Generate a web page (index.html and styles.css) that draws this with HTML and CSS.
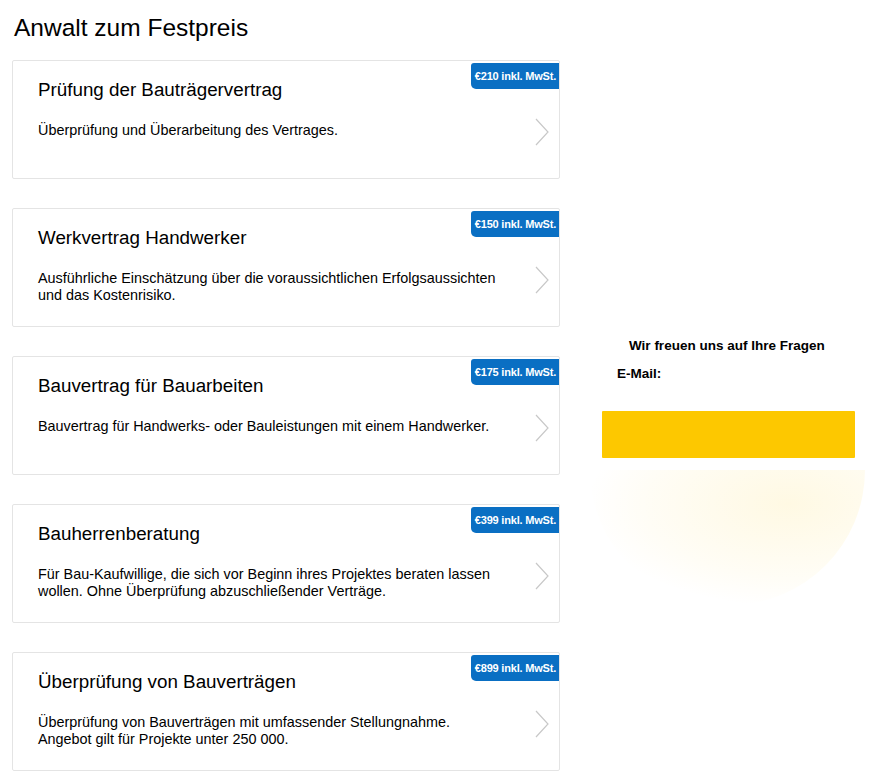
FILE: index.html
```html
<!DOCTYPE html>
<html lang="de">
<head>
<meta charset="utf-8">
<title>Anwalt zum Festpreis</title>
<link rel="stylesheet" href="styles.css">
</head>
<body>
<div class="page">
  <main class="main">
    <h1 class="page-title">Anwalt zum Festpreis</h1>
    <div class="cards">
      <a class="card">
        <span class="badge">€210 inkl. MwSt.</span>
        <h2 class="card-title">Prüfung der Bauträgervertrag</h2>
        <p class="card-text">Überprüfung und Überarbeitung des Vertrages.</p>
        <svg class="chev" viewBox="0 0 14 28" width="14" height="28"><path d="M1 1 L13 14 L1 27" fill="none" stroke="#c8c8c8" stroke-width="1.2"/></svg>
      </a>
      <a class="card">
        <span class="badge">€150 inkl. MwSt.</span>
        <h2 class="card-title">Werkvertrag Handwerker</h2>
        <p class="card-text">Ausführliche Einschätzung über die voraussichtlichen Erfolgsaussichten<br>und das Kostenrisiko.</p>
        <svg class="chev" viewBox="0 0 14 28" width="14" height="28"><path d="M1 1 L13 14 L1 27" fill="none" stroke="#c8c8c8" stroke-width="1.2"/></svg>
      </a>
      <a class="card">
        <span class="badge">€175 inkl. MwSt.</span>
        <h2 class="card-title">Bauvertrag für Bauarbeiten</h2>
        <p class="card-text">Bauvertrag für Handwerks- oder Bauleistungen mit einem Handwerker.</p>
        <svg class="chev" viewBox="0 0 14 28" width="14" height="28"><path d="M1 1 L13 14 L1 27" fill="none" stroke="#c8c8c8" stroke-width="1.2"/></svg>
      </a>
      <a class="card">
        <span class="badge">€399 inkl. MwSt.</span>
        <h2 class="card-title">Bauherrenberatung</h2>
        <p class="card-text">Für Bau-Kaufwillige, die sich vor Beginn ihres Projektes beraten lassen<br>wollen. Ohne Überprüfung abzuschließender Verträge.</p>
        <svg class="chev" viewBox="0 0 14 28" width="14" height="28"><path d="M1 1 L13 14 L1 27" fill="none" stroke="#c8c8c8" stroke-width="1.2"/></svg>
      </a>
      <a class="card">
        <span class="badge">€899 inkl. MwSt.</span>
        <h2 class="card-title">Überprüfung von Bauverträgen</h2>
        <p class="card-text">Überprüfung von Bauverträgen mit umfassender Stellungnahme.<br>Angebot gilt für Projekte unter 250 000.</p>
        <svg class="chev" viewBox="0 0 14 28" width="14" height="28"><path d="M1 1 L13 14 L1 27" fill="none" stroke="#c8c8c8" stroke-width="1.2"/></svg>
      </a>
    </div>
  </main>
  <aside class="side">
    <p class="side-lead">Wir freuen uns auf Ihre Fragen</p>
    <p class="side-label">E-Mail:</p>
    <div class="side-button"></div>
    <div class="side-glow"></div>
  </aside>
</div>
</body>
</html>
```
FILE: styles.css
```css
* { box-sizing: border-box; }
html, body { margin: 0; padding: 0; background: #fff; }
body {
  font-family: "Liberation Sans", Arial, sans-serif;
  color: #000;
}
.page {
  display: flex;
  align-items: flex-start;
  width: 869px;
}
.main {
  width: 560px;
  padding-left: 12px;
}
.page-title {
  margin: 0;
  padding: 14px 0 0 2px;
  height: 60px;
  font-size: 24.5px;
  font-weight: normal;
  line-height: 28px;
}
.cards {
  display: flex;
  flex-direction: column;
  gap: 29px;
}
.card {
  position: relative;
  display: block;
  width: 548px;
  height: 119px;
  border: 1px solid #e4e4e4;
  border-radius: 2px;
  padding: 17px 50px 0 25px;
  color: #000;
  text-decoration: none;
}
.card-title {
  margin: 0;
  font-size: 18.8px;
  font-weight: normal;
  line-height: 24px;
}
.card-text {
  margin: 20px 0 0;
  font-size: 14.4px;
  line-height: 17px;
}
.badge {
  position: absolute;
  top: 2px;
  right: 0;
  background: #0a6fc3;
  color: #fff;
  font-family: "Liberation Sans Narrow", "Liberation Sans", Arial, sans-serif;
  font-weight: bold;
  font-size: 11px;
  line-height: 26px;
  height: 26px;
  padding: 0 3px 0 4px;
  border-radius: 3px 0 0 5px;
  letter-spacing: -0.2px;
}
.chev {
  position: absolute;
  right: 10px;
  top: 57px;
}
.side {
  position: relative;
  width: 309px;
  padding-top: 338px;
}
.side-lead {
  margin: 0 0 0 69px;
  font-size: 13.5px;
  font-weight: bold;
  line-height: 16px;
}
.side-label {
  margin: 12px 0 0 57px;
  font-size: 13.5px;
  font-weight: bold;
  line-height: 16px;
}
.side-button {
  margin: 29px 0 0 42px;
  width: 253px;
  height: 47px;
  background: #fdc800;
  border-radius: 1px;
}
.side-glow {
  margin: 12px 0 0 30px;
  width: 275px;
  height: 135px;
  border-radius: 0 0 140px 140px;
  background: radial-gradient(ellipse at 72% 25%, rgba(253, 200, 0, 0.11), rgba(253, 200, 0, 0.04) 50%, rgba(253, 200, 0, 0) 72%);
}
```
